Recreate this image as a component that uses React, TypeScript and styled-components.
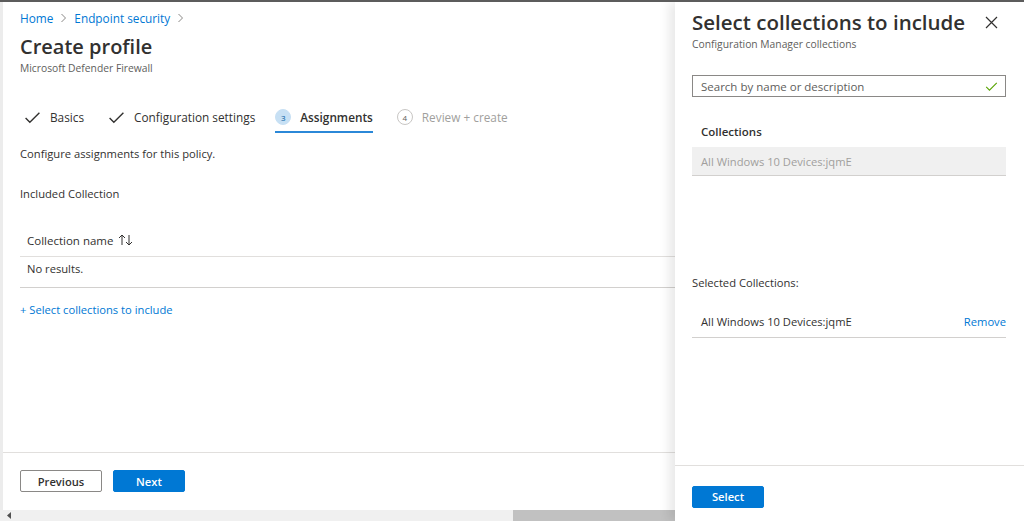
import React from "react";
import styled, { createGlobalStyle } from "styled-components";

const Global = createGlobalStyle`
  html, body { margin: 0; padding: 0; }
  body { font-family: "Open Sans", "Noto Sans", sans-serif; color: #323130; background: #fff; }
  * { box-sizing: border-box; }
`;

const Page = styled.div`
  display: flex;
  width: 1024px;
  height: 521px;
  border-top: 2px solid #5c5c5c;
  overflow: hidden;
`;

const Main = styled.div`
  width: 675px;
  flex: none;
  display: flex;
  flex-direction: column;
  border-left: 3px solid #ececec;
`;

const Content = styled.div`
  flex: 1;
  padding: 7px 0 0 17px;
  display: flex;
  flex-direction: column;
`;

const Breadcrumb = styled.div`
  display: flex;
  align-items: center;
  gap: 7px;
  font-size: 11.8px;
  line-height: 18px;
`;

const Crumb = styled.span`
  color: #0078d4;
`;

const Chevron = styled.span`
  color: #8a8886;
  display: inline-flex;
`;

const Title = styled.h1`
  margin: 6px 0 0;
  font-size: 20px;
  line-height: 28px;
  font-weight: 600;
  color: #323130;
`;

const Sub = styled.div`
  font-size: 10.3px;
  line-height: 14px;
  color: #605e5c;
`;

const Tabs = styled.div`
  display: flex;
  margin-top: 30px;
  gap: 20px;
`;

const Tab = styled.div<{ $active?: boolean; $muted?: boolean }>`
  display: flex;
  align-items: center;
  gap: 9px;
  height: 28px;
  padding: 0 0 2px ${(p) => (p.$active ? 0 : 4)}px;
  border-bottom: 2px solid ${(p) => (p.$active ? "#2b88d8" : "transparent")};
  font-size: 11.8px;
  font-weight: ${(p) => (p.$active ? 600 : 400)};
  color: ${(p) => (p.$muted ? "#a19f9d" : "#323130")};
`;

const Step = styled.span<{ $filled?: boolean }>`
  width: 16px;
  height: 16px;
  border-radius: 50%;
  display: inline-flex;
  align-items: center;
  justify-content: center;
  font-size: 8px;
  font-weight: 400;
  background: ${(p) => (p.$filled ? "#c7e0f4" : "#fff")};
  border: 1px solid ${(p) => (p.$filled ? "#c7e0f4" : "#c8c6c4")};
  color: ${(p) => (p.$filled ? "#005a9e" : "#605e5c")};
`;

const Text = styled.div<{ $mt: number }>`
  margin-top: ${(p) => p.$mt}px;
  font-size: 11.2px;
  line-height: 18px;
  color: #323130;
`;

const Table = styled.div`
  margin-top: 21px;
  display: flex;
  flex-direction: column;
`;

const HeaderRow = styled.div`
  height: 33px;
  display: flex;
  align-items: center;
  padding-left: 7px;
  border-bottom: 1px solid #e1dfdd;
  font-size: 11.5px;
  font-weight: 400;
  color: #323130;
  gap: 5px;
`;

const BodyRow = styled.div`
  height: 31px;
  padding: 3px 0 0 7px;
  line-height: 18px;
  border-bottom: 1px solid #d2d0ce;
  font-size: 11.2px;
  color: #323130;
`;

const Link = styled.div`
  margin-top: 13px;
  font-size: 11.2px;
  line-height: 18px;
  color: #0078d4;
`;

const Footer = styled.div`
  height: 58px;
  border-top: 1px solid #e1dfdd;
  display: flex;
  align-items: flex-start;
  padding: 17px 0 0 17px;
  gap: 11px;
`;

const Button = styled.button<{ $primary?: boolean; $w: number }>`
  width: ${(p) => p.$w}px;
  height: 22px;
  border-radius: 2px;
  font-family: inherit;
  font-size: 11.2px;
  font-weight: 600;
  padding: 0;
  cursor: pointer;
  background: ${(p) => (p.$primary ? "#0078d4" : "#fff")};
  color: ${(p) => (p.$primary ? "#fff" : "#323130")};
  border: 1px solid ${(p) => (p.$primary ? "#0078d4" : "#8a8886")};
`;

const Scrollbar = styled.div`
  height: 11px;
  background: #f0f0f0;
  display: flex;
  align-items: center;
  margin-left: -3px;
`;

const ScrollArrow = styled.span`
  width: 16px;
  display: flex;
  justify-content: center;
  padding-left: 2px;
`;

const ScrollTrack = styled.div`
  flex: 1;
  height: 11px;
  display: flex;
  justify-content: flex-end;
`;

const Thumb = styled.div`
  width: 162px;
  height: 11px;
  background: #c1c1c1;
`;

const Panel = styled.aside`
  flex: 1;
  display: flex;
  flex-direction: column;
  background: #fff;
  box-shadow: -6px 0 10px rgba(0, 0, 0, 0.09);
  position: relative;
  z-index: 1;
`;

const PanelBody = styled.div`
  flex: 1;
  padding: 6px 18px 0 17px;
  display: flex;
  flex-direction: column;
`;

const PanelHead = styled.div`
  display: flex;
  justify-content: space-between;
  align-items: center;
`;

const PanelTitle = styled.h2`
  margin: 0;
  font-size: 20.5px;
  line-height: 28px;
  font-weight: 600;
  color: #323130;
`;

const CloseBtn = styled.span`
  display: inline-flex;
  margin-right: 8px;
  color: #323130;
`;

const PanelSub = styled.div`
  margin-top: 1px;
  font-size: 10.3px;
  line-height: 14px;
  color: #605e5c;
`;

const Search = styled.div`
  margin-top: 24px;
  height: 22px;
  border: 1px solid #8a8886;
  display: flex;
  align-items: center;
  justify-content: space-between;
  padding: 0 7px 0 8px;
  font-size: 11.5px;
  color: #605e5c;
`;

const SectionLabel = styled.div`
  margin-top: 26px;
  padding-left: 9px;
  font-size: 11.5px;
  line-height: 18px;
  font-weight: 600;
  color: #323130;
`;

const DisabledRow = styled.div`
  margin-top: 6px;
  height: 29px;
  background: #f0f0f0;
  border-bottom: 1px solid #d2d0ce;
  display: flex;
  align-items: center;
  padding-left: 9px;
  font-size: 11.2px;
  color: #a19f9d;
`;

const Plain = styled.div`
  margin-top: 98px;
  font-size: 11.2px;
  line-height: 18px;
  color: #323130;
`;

const SelectedRow = styled.div`
  margin-top: 16px;
  height: 30px;
  border-bottom: 1px solid #d2d0ce;
  display: flex;
  align-items: center;
  justify-content: space-between;
  padding: 0 0 2px 9px;
  font-size: 11.2px;
  color: #323130;
`;

const RemoveLink = styled.span`
  color: #0078d4;
`;

const PanelFooter = styled.div`
  height: 56px;
  border-top: 1px solid #e1dfdd;
  padding: 18px 0 0 17px;
`;

const Check = ({ color = "#323130", size = 16 }: { color?: string; size?: number }) => (
  <svg width={size} height={size} viewBox="0 0 16 16" fill="none">
    <path d="M1.5 8.5 L5.5 12.5 L14.5 3.5" stroke={color} strokeWidth="1.3" />
  </svg>
);

const ChevronIcon = () => (
  <svg width="7" height="10" viewBox="0 0 7 10" fill="none">
    <path d="M1.5 1 L5.5 5 L1.5 9" stroke="#8a8886" strokeWidth="1" />
  </svg>
);

export default function App() {
  return (
    <>
      <Global />
      <Page>
        <Main>
          <Content>
            <Breadcrumb>
              <Crumb>Home</Crumb>
              <Chevron><ChevronIcon /></Chevron>
              <Crumb>Endpoint security</Crumb>
              <Chevron><ChevronIcon /></Chevron>
            </Breadcrumb>
            <Title>Create profile</Title>
            <Sub>Microsoft Defender Firewall</Sub>
            <Tabs>
              <Tab>
                <Check size={17} />
                Basics
              </Tab>
              <Tab>
                <Check size={17} />
                Configuration settings
              </Tab>
              <Tab $active>
                <Step $filled>3</Step>
                Assignments
              </Tab>
              <Tab $muted>
                <Step>4</Step>
                Review + create
              </Tab>
            </Tabs>
            <Text $mt={12}>Configure assignments for this policy.</Text>
            <Text $mt={22}>Included Collection</Text>
            <Table>
              <HeaderRow>
                Collection name
                <svg width="16" height="12" viewBox="0 0 16 12" fill="none">
                  <path d="M4 11 V1 M1 4 L4 1 L7 4" stroke="#323130" strokeWidth="1" />
                  <path d="M11 1 V11 M8 8 L11 11 L14 8" stroke="#323130" strokeWidth="1" />
                </svg>
              </HeaderRow>
              <BodyRow>No results.</BodyRow>
            </Table>
            <Link>+ Select collections to include</Link>
          </Content>
          <Footer>
            <Button $w={82}>Previous</Button>
            <Button $w={72} $primary>Next</Button>
          </Footer>
          <Scrollbar>
            <ScrollArrow>
              <svg width="4" height="7" viewBox="0 0 4 7">
                <path d="M4 0 L0 3.5 L4 7 Z" fill="#505050" />
              </svg>
            </ScrollArrow>
            <ScrollTrack>
              <Thumb />
            </ScrollTrack>
          </Scrollbar>
        </Main>
        <Panel>
          <PanelBody>
            <PanelHead>
              <PanelTitle>Select collections to include</PanelTitle>
              <CloseBtn>
                <svg width="13" height="13" viewBox="0 0 13 13" fill="none">
                  <path d="M1 1 L12 12 M12 1 L1 12" stroke="#323130" strokeWidth="1.2" />
                </svg>
              </CloseBtn>
            </PanelHead>
            <PanelSub>Configuration Manager collections</PanelSub>
            <Search>
              Search by name or description
              <Check color="#57a300" size={13} />
            </Search>
            <SectionLabel>Collections</SectionLabel>
            <DisabledRow>All Windows 10 Devices:jqmE</DisabledRow>
            <Plain>Selected Collections:</Plain>
            <SelectedRow>
              All Windows 10 Devices:jqmE
              <RemoveLink>Remove</RemoveLink>
            </SelectedRow>
          </PanelBody>
          <PanelFooter>
            <Button $w={72} $primary>Select</Button>
          </PanelFooter>
        </Panel>
      </Page>
    </>
  );
}
